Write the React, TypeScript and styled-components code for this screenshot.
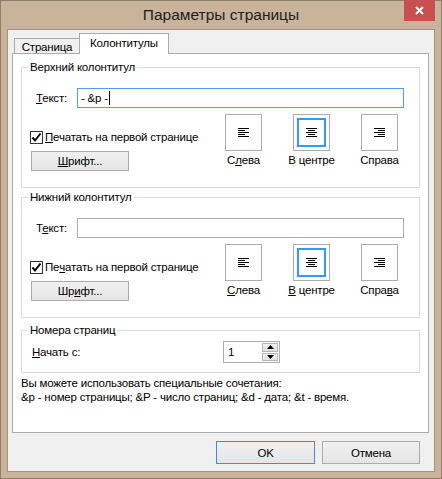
import React from "react";
import styled, { createGlobalStyle } from "styled-components";

const GlobalStyle = createGlobalStyle`
  html, body {
    margin: 0;
    padding: 0;
    background: #ffffff;
  }
  body {
    font-family: "Liberation Sans", Arial, sans-serif;
    font-size: 11.5px;
    letter-spacing: -0.2px;
    color: #000;
  }
`;

const Window = styled.div`
  width: 442px;
  height: 479px;
  box-sizing: border-box;
  border: 1px solid #8e7e6b;
  background: #c9b39b;
  padding: 0 6px 6px;
  display: flex;
  flex-direction: column;
`;

const TitleBar = styled.div`
  position: relative;
  height: 28px;
  display: flex;
  align-items: center;
  justify-content: center;
  font-size: 15.5px;
  letter-spacing: 0;
  color: #1e1e1e;
`;

const CloseButton = styled.div`
  position: absolute;
  top: -1px;
  right: 0;
  width: 31px;
  height: 21px;
  background: #c75050;
  display: flex;
  align-items: center;
  justify-content: center;
`;

const Client = styled.div`
  flex: 1;
  border: 1px solid #a3927f;
  background: #f0f0f0;
  display: flex;
  flex-direction: column;
  padding: 3px 5px 7px 4px;
  min-height: 0;
`;

const TabStrip = styled.div`
  height: 20px;
  display: flex;
  align-items: flex-end;
  padding-left: 2px;
`;

const Tab = styled.div<{ $active?: boolean }>`
  box-sizing: border-box;
  border: 1px solid #acacac;
  border-bottom: none;
  display: flex;
  justify-content: center;
  white-space: nowrap;
  ${(p) =>
    p.$active
      ? `
    position: relative;
    z-index: 1;
    width: 90px;
    height: 21px;
    margin-left: -1px;
    margin-bottom: -1px;
    background: #ffffff;
    padding-top: 3px;
  `
      : `
    width: 66px;
    height: 15px;
    background: #f0f0f0;
    align-items: center;
    padding-top: 1px;
  `}
`;

const Panel = styled.div`
  flex: 1;
  border: 1px solid #acacac;
  background: #ffffff;
  display: flex;
  flex-direction: column;
`;

const Group = styled.fieldset<{ $top: number }>`
  margin: ${(p) => p.$top}px 8px 0;
  padding: 0 0 0 6px;
  border: 1px solid #dcdcdc;
  min-width: 0;
`;

const Legend = styled.legend`
  padding: 0 2px;
  line-height: 16px;
`;

const TextRow = styled.div<{ $top: number }>`
  display: flex;
  align-items: center;
  margin: ${(p) => p.$top}px 15px 0 8px;
`;

const FieldLabel = styled.span`
  width: 41px;
  flex: none;
`;

const TextBox = styled.div<{ $focused?: boolean }>`
  flex: 1;
  height: 20px;
  box-sizing: border-box;
  border: 1px solid ${(p) => (p.$focused ? "#569de5" : "#abadb3")};
  background: #fff;
  display: flex;
  align-items: center;
  padding-left: 3px;
  white-space: pre;
`;

const Caret = styled.span`
  display: inline-block;
  width: 1px;
  height: 14px;
  background: #000;
  margin-left: 1px;
`;

const OptionsRow = styled.div`
  display: flex;
  margin-top: 6px;
  padding-bottom: 16px;
`;

const LeftPart = styled.div`
  width: 197px;
  flex: none;
  padding-top: 15px;
  display: flex;
  flex-direction: column;
  align-items: flex-start;
`;

const CheckRow = styled.div`
  display: flex;
  align-items: center;
  height: 16px;
  margin-left: 2px;
  white-space: nowrap;
`;

const CheckBox = styled.span`
  width: 13px;
  height: 13px;
  box-sizing: border-box;
  border: 1px solid #333333;
  background: #fff;
  display: flex;
  align-items: center;
  justify-content: center;
  margin-right: 2px;
`;

const PushButton = styled.div<{ $default?: boolean; $w: number; $h: number }>`
  width: ${(p) => p.$w}px;
  height: ${(p) => p.$h}px;
  box-sizing: border-box;
  border: 1px solid ${(p) => (p.$default ? "#3c8fe3" : "#acacac")};
  background: linear-gradient(#f0f0f0, #e5e5e5);
  display: flex;
  align-items: center;
  justify-content: center;
`;

const FontButton = styled(PushButton)`
  margin: 6px 0 0 3px;
`;

const AlignGroup = styled.div`
  display: flex;
  gap: 31px;
`;

const AlignColumn = styled.div`
  width: 37px;
  display: flex;
  flex-direction: column;
  align-items: center;
`;

const AlignBox = styled.div`
  width: 37px;
  height: 37px;
  box-sizing: border-box;
  border: 1px solid #adadad;
  background: #fff;
  padding: 3px;
  display: flex;
`;

const AlignInner = styled.div<{ $selected?: boolean }>`
  flex: 1;
  border: 2px solid ${(p) => (p.$selected ? "#3399ff" : "transparent")};
  display: flex;
  align-items: center;
  justify-content: center;
`;

const AlignLabel = styled.span`
  margin-top: 1px;
  line-height: 16px;
  white-space: nowrap;
`;

const Mn = styled.span`
  text-decoration: underline;
`;

const NumberRow = styled.div`
  display: flex;
  align-items: center;
  margin: 3px 0 9px 4px;
`;

const NumberLabel = styled.span`
  width: 191px;
  flex: none;
`;

const Spinner = styled.div`
  width: 57px;
  height: 22px;
  box-sizing: border-box;
  border: 1px solid #abadb3;
  background: #fff;
  display: flex;
  align-items: center;
  padding: 1px 1px 1px 4px;
`;

const SpinValue = styled.span`
  flex: 1;
`;

const SpinButtons = styled.div`
  width: 16px;
  height: 100%;
  display: flex;
  flex-direction: column;
  gap: 1px;
`;

const SpinButton = styled.div`
  flex: 1;
  box-sizing: border-box;
  border: 1px solid #b5b5b5;
  background: linear-gradient(#f2f2f2, #e1e1e1);
  display: flex;
  align-items: center;
  justify-content: center;
`;

const HintLine = styled.div<{ $top: number }>`
  margin: ${(p) => p.$top}px 0 0 8px;
  line-height: 14px;
  height: 14px;
`;

const ButtonBar = styled.div`
  display: flex;
  justify-content: flex-end;
  gap: 7px;
  margin-top: 8px;
  padding-right: 9px;
`;

type Align = "left" | "center" | "right";

function AlignIcon({ align }: { align: Align }) {
  const widths = [11, 7, 11, 7, 11];
  return (
    <svg width="11" height="9" viewBox="0 0 11 9">
      {widths.map((w, i) => {
        const x = align === "left" ? 0 : align === "right" ? 11 - w : (11 - w) / 2;
        return <rect key={i} x={x} y={i * 2} width={w} height={1} fill="#000" />;
      })}
    </svg>
  );
}

function Check() {
  return (
    <svg width="11" height="11" viewBox="0 0 11 11">
      <path d="M1.5 5.5 L4 8.5 L9.5 1.5" stroke="#000" strokeWidth="2" fill="none" />
    </svg>
  );
}

interface HeaderProps {
  title: string;
  top: number;
  value: string;
  focused?: boolean;
  labels: React.ReactNode[];
  textLabel: React.ReactNode;
  printLabel: React.ReactNode;
  fontLabel: React.ReactNode;
}

function HeaderGroup({ title, top, value, focused, labels, textLabel, printLabel, fontLabel }: HeaderProps) {
  const aligns: Align[] = ["left", "center", "right"];
  return (
    <Group $top={top}>
      <Legend>{title}</Legend>
      <TextRow $top={13}>
        <FieldLabel>{textLabel}</FieldLabel>
        <TextBox $focused={focused}>
          {value}
          {focused && <Caret />}
        </TextBox>
      </TextRow>
      <OptionsRow>
        <LeftPart>
          <CheckRow>
            <CheckBox>
              <Check />
            </CheckBox>
            {printLabel}
          </CheckRow>
          <FontButton $w={98} $h={20}>
            {fontLabel}
          </FontButton>
        </LeftPart>
        <AlignGroup>
          {aligns.map((a, i) => (
            <AlignColumn key={a}>
              <AlignBox>
                <AlignInner $selected={a === "center"}>
                  <AlignIcon align={a} />
                </AlignInner>
              </AlignBox>
              <AlignLabel>{labels[i]}</AlignLabel>
            </AlignColumn>
          ))}
        </AlignGroup>
      </OptionsRow>
    </Group>
  );
}

export default function App() {
  return (
    <>
      <GlobalStyle />
      <Window>
        <TitleBar>
          Параметры страницы
          <CloseButton>
            <svg width="9" height="9" viewBox="0 0 9 9">
              <path d="M1 1 L8 8 M8 1 L1 8" stroke="#fff" strokeWidth="2" />
            </svg>
          </CloseButton>
        </TitleBar>
        <Client>
          <TabStrip>
            <Tab>Страница</Tab>
            <Tab $active>Колонтитулы</Tab>
          </TabStrip>
          <Panel>
            <HeaderGroup
              title="Верхний колонтитул"
              top={5}
              value="- &p -"
              focused
              textLabel={<><Mn>Т</Mn>екст:</>}
              printLabel={<><Mn>П</Mn>ечатать на первой странице</>}
              fontLabel={<><Mn>Ш</Mn>рифт...</>}
              labels={[
                <>С<Mn>л</Mn>ева</>,
                <>В центре</>,
                <>Справа</>,
              ]}
            />
            <HeaderGroup
              title="Нижний колонтитул"
              top={1}
              value=""
              textLabel={<>Т<Mn>е</Mn>кст:</>}
              printLabel={<>Пе<Mn>ч</Mn>атать на первой странице</>}
              fontLabel={<>Шр<Mn>и</Mn>фт...</>}
              labels={[
                <><Mn>С</Mn>лева</>,
                <><Mn>В</Mn> центре</>,
                <>Спра<Mn>в</Mn>а</>,
              ]}
            />
            <Group $top={4}>
              <Legend>Номера страниц</Legend>
              <NumberRow>
                <NumberLabel>
                  <Mn>Н</Mn>ачать с:
                </NumberLabel>
                <Spinner>
                  <SpinValue>1</SpinValue>
                  <SpinButtons>
                    <SpinButton>
                      <svg width="7" height="4" viewBox="0 0 7 4">
                        <path d="M0 4 L3.5 0 L7 4 Z" fill="#000" />
                      </svg>
                    </SpinButton>
                    <SpinButton>
                      <svg width="7" height="4" viewBox="0 0 7 4">
                        <path d="M0 0 L3.5 4 L7 0 Z" fill="#000" />
                      </svg>
                    </SpinButton>
                  </SpinButtons>
                </Spinner>
              </NumberRow>
            </Group>
            <HintLine $top={3}>Вы можете использовать специальные сочетания:</HintLine>
            <HintLine $top={0}>
              &amp;p - номер страницы; &amp;P - число страниц; &amp;d - дата; &amp;t - время.
            </HintLine>
          </Panel>
          <ButtonBar>
            <PushButton $default $w={99} $h={23}>
              OK
            </PushButton>
            <PushButton $w={98} $h={23}>
              Отмена
            </PushButton>
          </ButtonBar>
        </Client>
      </Window>
    </>
  );
}
